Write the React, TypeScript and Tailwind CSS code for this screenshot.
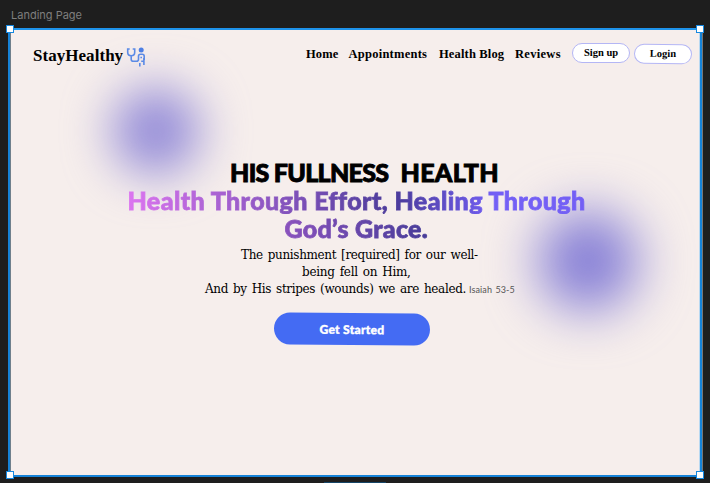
export default function App() {
  return (
    <div className="relative flex h-[483px] w-[710px] flex-col overflow-hidden bg-[#1e1e1e]">
      <div className="h-[28px] shrink-0 pl-[11px] pt-[8px] font-['Inter',sans-serif] text-[11px] leading-[15px] text-[#7f7f7f]">
        Landing Page
      </div>

      <div className="relative ml-[8px] h-[449px] w-[694px] shrink-0 border-2 border-[#1683d8] border-t-[#1e93ea] bg-[#f6eeec] pl-px shadow-[inset_1px_0_#6f7f8c,inset_-1px_0_#b9d9f2,1px_0_#777]">
        <div className="absolute left-[102px] top-[57px] size-[88px] rounded-full bg-[#948cd8] blur-[24px]" />
        <div className="absolute left-[528px] top-[181px] size-[100px] rounded-full bg-[#857ed6] blur-[26px]" />

        <header className="relative flex h-[52px] items-start pl-[22px] pt-[13px] font-['Liberation_Serif',serif] font-bold text-black">
          <div className="flex w-[273px] items-start">
            <span className="w-[93px] whitespace-nowrap pt-[2px] text-[17px] leading-[22px] tracking-[0.04px]">StayHealthy</span>
            <svg className="mt-[4px] h-[21px] w-[20px]" viewBox="0 0 20 21" fill="none" stroke="#5b8ae6" strokeWidth="1.6">
              <path d="M3.7 2H1.7v3.2c0 4.7 7 4.7 7 0V2h-2M5.2 9v3.2q0 2 2 2h3.3q2 0 2-2V9.3q0-2 2-2h1.7q2 0 2 2V13" />
              <path d="M17.9 11v3.3h-2.7M17.9 14v4M15.2 9.8v1.5M13.8 16v3.5" />
              <circle cx="15.2" cy="3" r="2.5" fill="#4d7fe4" stroke="none" />
            </svg>
          </div>
          <nav className="flex pt-px text-[12.5px] leading-[21px] tracking-[0.1px] whitespace-nowrap">
            <a className="w-[42.5px]">Home</a>
            <a className="w-[90.5px] tracking-[0.25px]">Appointments</a>
            <a className="w-[76px] tracking-[0.15px]">Health Blog</a>
            <a className="w-[57px] tracking-[0.3px]">Reviews</a>
          </nav>
          <button className="h-[20px] w-[58px] shrink-0 rounded-full border border-[#b4b6f5] bg-white text-[10.5px] leading-[16px]">Sign up</button>
          <button className="ml-[4px] mt-[1px] h-[20px] w-[58px] shrink-0 rotate-[0.6deg] rounded-full border border-[#b4b6f5] bg-white text-[10.5px] leading-[16px]">Login</button>
        </header>

        <main className="relative flex flex-col text-black">
          <h1 className="mt-[76px] flex flex-col whitespace-pre font-['Lato',sans-serif] text-[25px] font-black leading-[28px] [font-variant-ligatures:none]">
            <span className="ml-[219px] flex [-webkit-text-stroke:0.9px_black]">
              <span className="w-[170.5px] tracking-[-0.7px]">HIS FULLNESS  </span>
              <span className="tracking-[0.3px]">HEALTH</span>
            </span>
            <span className="ml-[116.5px] w-fit bg-linear-to-r from-[#dc75f0] via-[#4b3b9a] via-58% to-[#735ff5] to-80% bg-clip-text tracking-[0.42px] text-transparent [-webkit-text-stroke:0.8px_transparent]">Health Through Effort, Healing Through</span>
            <span className="ml-[273.5px] w-fit bg-linear-to-r from-[#8a52bd] to-[#463b98] bg-clip-text tracking-[0.3px] text-transparent [-webkit-text-stroke:0.8px_transparent]">God’s Grace.</span>
          </h1>
          <div className="mt-[5px] flex flex-col whitespace-pre font-['DejaVu_Serif',serif] text-[12px] leading-[17px] tracking-[-0.35px] [word-spacing:1.5px]">
            <span className="ml-[230px] w-fit">The punishment [required] for our well-</span>
            <span className="ml-[291px] w-fit tracking-[-0.28px]">being fell on Him,</span>
            <div className="ml-[194px] flex">
              <span className="w-[264px]">And by His stripes (wounds) we are healed.</span>
              <span className="font-['Lato',sans-serif] text-[9px] tracking-[0.1px] text-[#555] [word-spacing:1px]">Isaiah 53-5</span>
            </div>
          </div>
          <button className="ml-[263px] mt-[15px] h-[32px] w-[156px] rotate-[0.5deg] rounded-full bg-[#446bf3] font-['Lato',sans-serif] text-[12px] font-black leading-[34px] tracking-[0.3px] text-white [-webkit-text-stroke:0.4px_white]">
            Get Started
          </button>
        </main>
      </div>

      <i className="absolute left-[6px] top-[25px] size-[8px] border border-[#1688e0] bg-white" />
      <i className="absolute left-[696px] top-[25px] size-[8px] border border-[#1688e0] bg-white" />
      <i className="absolute left-[6px] top-[471px] size-[8px] border border-[#1688e0] bg-white" />
      <i className="absolute left-[696px] top-[471px] size-[8px] border border-[#1688e0] bg-white" />
      <div className="absolute left-[324px] top-[482px] h-px w-[62px] bg-[#164668]" />
    </div>
  )
}
